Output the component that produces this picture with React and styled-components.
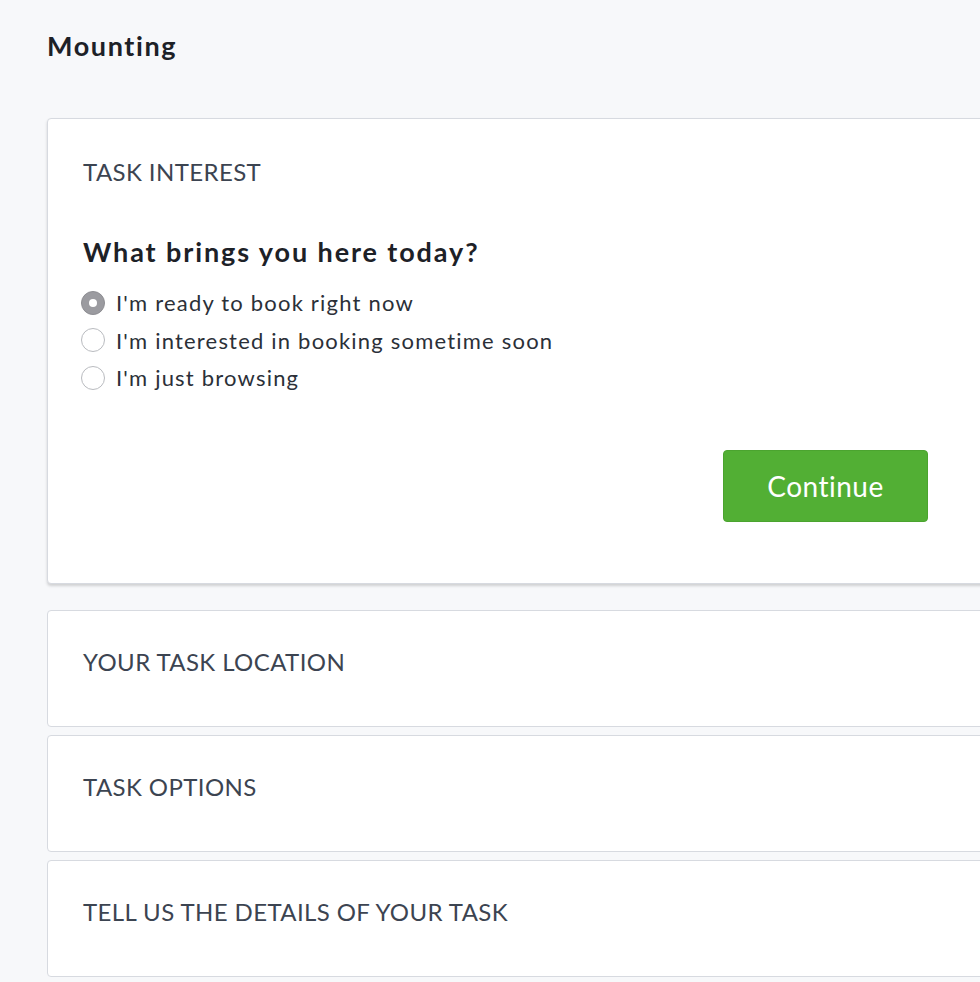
import React, { useState } from "react";
import styled, { createGlobalStyle } from "styled-components";

const GlobalStyle = createGlobalStyle`
  html, body {
    margin: 0;
    padding: 0;
    background: #f7f8fa;
    overflow-x: hidden;
  }
  body {
    font-family: "Lato", "Liberation Sans", sans-serif;
    -webkit-font-smoothing: antialiased;
  }
`;

const Page = styled.div`
  width: 1040px;
  padding: 26px 0 0 47px;
  box-sizing: border-box;
`;

const Title = styled.h1`
  margin: 0 0 52px;
  font-size: 27px;
  line-height: 40px;
  font-weight: 700;
  letter-spacing: 1.6px;
  color: #1d2127;
`;

const Stack = styled.div`
  display: flex;
  flex-direction: column;
  gap: 8px;
`;

const Card = styled.section`
  background: #fff;
  border: 1px solid #d7dae0;
  border-radius: 4px;
  padding: ${(p) => (p.$open ? "38px 35px 61px" : "0 35px 12px")};
  height: ${(p) => (p.$open ? "auto" : "115px")};
  box-sizing: ${(p) => (p.$open ? "content-box" : "border-box")};
  min-height: ${(p) => (p.$open ? "0" : "117px")};
  display: flex;
  flex-direction: column;
  justify-content: ${(p) => (p.$open ? "flex-start" : "center")};
  box-shadow: ${(p) => (p.$open ? "0 2px 3px rgba(0, 0, 0, 0.16)" : "none")};
  margin-bottom: ${(p) => (p.$open ? "18px" : "0")};
`;

const SectionLabel = styled.h2`
  margin: 0;
  font-size: 24px;
  line-height: 30px;
  font-weight: 400;
  letter-spacing: 0.4px;
  color: #3c4451;
`;

const Question = styled.h3`
  margin: 48px 0 15px;
  font-size: 27px;
  line-height: 34px;
  font-weight: 700;
  letter-spacing: 1.9px;
  color: #1d2127;
`;

const Options = styled.div`
  display: flex;
  flex-direction: column;
`;

const Option = styled.label`
  display: flex;
  align-items: center;
  gap: 11px;
  height: 37.5px;
  font-size: 22px;
  font-weight: 400;
  letter-spacing: 1.2px;
  color: #2b3038;
  cursor: pointer;
`;

const RadioDot = styled.span`
  box-sizing: border-box;
  width: 24px;
  height: 24px;
  margin-left: -2px;
  border-radius: 50%;
  flex-shrink: 0;
  background: ${(p) => (p.$checked ? "#9b9ba0" : "#fff")};
  border: 1px solid ${(p) => (p.$checked ? "#8e8e93" : "#b9bbbf")};
  display: flex;
  align-items: center;
  justify-content: center;

  &::after {
    content: "";
    width: 8px;
    height: 8px;
    border-radius: 50%;
    background: #fff;
    display: ${(p) => (p.$checked ? "block" : "none")};
  }
`;

const Footer = styled.div`
  display: flex;
  justify-content: flex-end;
  padding-right: 76px;
  margin-top: 53px;
`;

const ContinueButton = styled.button`
  width: 205px;
  height: 72px;
  border: 1px solid #4ba42f;
  border-radius: 4px;
  background: #52af34;
  color: #fff;
  font-family: inherit;
  font-size: 28px;
  font-weight: 400;
  letter-spacing: 0.5px;
  cursor: pointer;
`;

const options = [
  "I'm ready to book right now",
  "I'm interested in booking sometime soon",
  "I'm just browsing",
];

const sections = ["YOUR TASK LOCATION", "TASK OPTIONS", "TELL US THE DETAILS OF YOUR TASK"];

export default function App() {
  const [choice, setChoice] = useState(0);

  return (
    <Page>
      <GlobalStyle />
      <Title>Mounting</Title>
      <Stack>
        <Card $open>
          <SectionLabel>TASK INTEREST</SectionLabel>
          <Question>What brings you here today?</Question>
          <Options>
            {options.map((text, i) => (
              <Option key={text} onClick={() => setChoice(i)}>
                <RadioDot $checked={choice === i} />
                {text}
              </Option>
            ))}
          </Options>
          <Footer>
            <ContinueButton>Continue</ContinueButton>
          </Footer>
        </Card>
        {sections.map((s) => (
          <Card key={s}>
            <SectionLabel>{s}</SectionLabel>
          </Card>
        ))}
      </Stack>
    </Page>
  );
}
